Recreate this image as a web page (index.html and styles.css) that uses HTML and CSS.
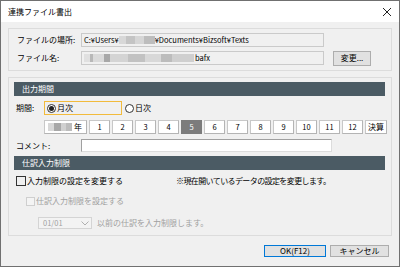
FILE: index.html
```html
<!DOCTYPE html>
<html lang="ja">
<head>
    <meta charset="UTF-8">
    <title>連携ファイル書出</title>
    <link rel="stylesheet" href="styles.css">
</head>
<body>
    <div class="window">
        <div class="titlebar">
            <span class="title">連携ファイル書出</span>
            <svg class="close" width="10" height="10" viewBox="0 0 10 10">
                <path d="M1 1 L9 9 M9 1 L1 9" stroke="#222" stroke-width="1" fill="none"/>
            </svg>
        </div>
        <div class="content">
            <div class="group files">
                <div class="file-row">
                    <span class="label">ファイルの場所:</span>
                    <div class="textbox">C:¥Users¥<span class="blur blur-user"></span>¥Documents¥Bizsoft¥Texts</div>
                </div>
                <div class="file-row">
                    <span class="label">ファイル名:</span>
                    <div class="textbox"><span class="blur blur-name"></span>bafx</div>
                    <button class="btn btn-change">変更...</button>
                </div>
            </div>

            <div class="group settings">
                <div class="section-head">出力期間</div>
                <div class="period-row">
                    <span class="label label-period">期間:</span>
                    <div class="radio-focus">
                        <span class="radio checked"></span><span>月次</span>
                    </div>
                    <span class="radio radio-day"></span><span>日次</span>
                </div>
                <div class="months">
                    <div class="cell cell-year"><span class="blur blur-year"></span>年</div>
                    <div class="cell">1</div>
                    <div class="cell">2</div>
                    <div class="cell">3</div>
                    <div class="cell">4</div>
                    <div class="cell selected">5</div>
                    <div class="cell">6</div>
                    <div class="cell">7</div>
                    <div class="cell">8</div>
                    <div class="cell">9</div>
                    <div class="cell">10</div>
                    <div class="cell">11</div>
                    <div class="cell">12</div>
                    <div class="cell cell-closing">決算</div>
                </div>
                <div class="comment-row">
                    <span class="label label-comment">コメント:</span>
                    <div class="comment-box"></div>
                </div>

                <div class="section-head">仕訳入力制限</div>
                <div class="check-row">
                    <span class="checkbox"></span>
                    <span class="check-text">入力制限の設定を変更する</span>
                    <span class="note">※現在開いているデータの設定を変更します。</span>
                </div>
                <div class="check-row sub disabled">
                    <span class="checkbox"></span>
                    <span>仕訳入力制限を設定する</span>
                </div>
                <div class="combo-row disabled">
                    <div class="combo">
                        <span>01/01</span>
                        <svg width="8" height="5" viewBox="0 0 8 5">
                            <path d="M0.5 0.5 L4 4 L7.5 0.5" stroke="#b0b0b0" fill="none"/>
                        </svg>
                    </div>
                    <span>以前の仕訳を入力制限します。</span>
                </div>
            </div>

            <div class="buttons">
                <button class="btn btn-ok">OK(F12)</button>
                <button class="btn btn-cancel">キャンセル</button>
            </div>
        </div>
    </div>
</body>
</html>
```

FILE: styles.css
```css
* {
    box-sizing: border-box;
}

body {
    margin: 0;
    font-family: "Noto Sans CJK JP", "Noto Sans", sans-serif;
    font-size: 8px;
    line-height: 1;
    color: #000;
}

.window {
    width: 400px;
    height: 267px;
    border: 1px solid #707070;
    background-color: #f0f0f0;
}

.titlebar {
    height: 21px;
    background-color: #fff;
    display: flex;
    align-items: center;
    justify-content: space-between;
    padding: 0 7px 0 7px;
}

.title {
    font-size: 8px;
}

.content {
    padding: 6px 7px 0 7px;
}

.group {
    border: 1px solid #dcdcdc;
}

.files {
    height: 43px;
    padding: 4px 0 0 8px;
    display: flex;
    flex-direction: column;
    gap: 4px;
}

.file-row {
    display: flex;
    align-items: center;
    height: 14px;
}

.file-row .label {
    width: 64px;
}

.textbox {
    width: 243px;
    height: 14px;
    border: 1px solid #cacaca;
    background-color: #f0f0f0;
    display: flex;
    align-items: center;
    padding-left: 2px;
    font-size: 7.5px;
    white-space: nowrap;
}

.blur {
    display: inline-block;
    height: 8px;
    filter: blur(0.6px);
}

.blur-user {
    width: 36px;
    background: linear-gradient(90deg, #d8d8d8 0 20%, #c4c4c4 20% 45%, #d6d6d6 45% 70%, #bdbdbd 70%);
}

.blur-name {
    width: 110px;
    margin-right: 1px;
    background: linear-gradient(90deg, #e0e0e0 0 5%, #b8b8b8 5% 8%, #dadada 8% 18%, #a8a8a8 18% 24%, #d4d4d4 24% 40%, #c2c2c2 40% 55%, #d8d8d8 55% 70%, #bcbcbc 70% 80%, #cfcfcf 80%);
}

.blur-year {
    width: 24px;
    margin-right: 2px;
    background: linear-gradient(90deg, #d8d8d8 0 25%, #a8a8a8 25% 55%, #d0d0d0 55% 75%, #bcbcbc 75%);
}

.btn {
    font-family: inherit;
    font-size: 8px;
    line-height: 1;
    padding: 0;
    background-color: #e1e1e1;
    border: 1px solid #adadad;
    color: #000;
}

.btn-change {
    margin-left: 9px;
    width: 38px;
    height: 15px;
}

.settings {
    margin-top: 6px;
    padding-bottom: 6px;
}

.section-head {
    height: 14px;
    margin: 4px 6px 0 5px;
    padding-left: 8px;
    background-color: #4b5b64;
    color: #fff;
    display: flex;
    align-items: center;
}

.period-row {
    margin-top: 5px;
    height: 14px;
    padding-left: 7px;
    display: flex;
    align-items: center;
}

.label-period {
    width: 28px;
}

.radio-focus {
    width: 78px;
    height: 14px;
    border: 1px solid #f2bb3c;
    display: flex;
    align-items: center;
    padding-left: 2px;
}

.radio {
    width: 9px;
    height: 9px;
    border: 1px solid #333;
    border-radius: 50%;
    background-color: #fff;
    margin-right: 1px;
    display: inline-flex;
    align-items: center;
    justify-content: center;
}

.radio.checked::after {
    content: "";
    width: 5px;
    height: 5px;
    border-radius: 50%;
    background-color: #222;
}

.radio-day {
    margin-left: 3px;
}

.months {
    margin: 5px 0 0 35px;
    height: 14px;
    display: flex;
    gap: 2px;
}

.cell {
    width: 21px;
    height: 14px;
    background-color: #fff;
    border: 1px solid #c8c8c8;
    border-right-color: #b4b4b4;
    border-bottom-color: #b4b4b4;
    display: flex;
    align-items: center;
    justify-content: center;
    font-size: 7.5px;
}

.cell-year {
    width: 43px;
    justify-content: flex-start;
    padding-left: 3px;
    font-size: 8px;
}

.cell-closing {
    width: 22px;
    font-size: 8px;
}

.cell.selected {
    background-color: #7c7c7c;
    border-color: #7c7c7c;
    color: #fff;
}

.comment-row {
    margin-top: 5px;
    height: 13px;
    padding-left: 7px;
    display: flex;
    align-items: center;
}

.label-comment {
    width: 65px;
}

.comment-box {
    width: 251px;
    height: 13px;
    background-color: #fff;
    border: 1px solid #a0a0a0;
    border-right-color: #dcdcdc;
    border-bottom-color: #dcdcdc;
}

.check-row {
    margin-top: 5px;
    height: 12px;
    padding-left: 7px;
    display: flex;
    align-items: center;
}

.checkbox {
    width: 10px;
    height: 10px;
    border: 1px solid #333;
    margin-right: 1px;
}

.note {
    margin-left: 53px;
    letter-spacing: -0.6px;
}

.check-row.sub {
    margin-top: 8px;
    padding-left: 17px;
}

.disabled {
    color: #a0a0a0;
}

.disabled .checkbox {
    width: 9px;
    height: 9px;
    border-color: #cfcfcf;
    background-color: #f4f4f4;
}

.combo-row {
    margin-top: 10px;
    height: 12px;
    padding-left: 29px;
    display: flex;
    align-items: center;
}

.combo {
    width: 54px;
    height: 12px;
    border: 1px solid #d4d4d4;
    background-color: #f3f3f3;
    display: flex;
    align-items: center;
    justify-content: space-between;
    padding: 0 2px 0 4px;
    margin-right: 5px;
    font-size: 7.5px;
}

.buttons {
    margin-top: 9px;
    padding-right: 3px;
    display: flex;
    justify-content: flex-end;
    gap: 4px;
}

.btn-ok,
.btn-cancel {
    width: 62px;
    height: 12px;
}

.btn-cancel {
    width: 59px;
}

.btn-ok {
    border-color: #0078d7;
}
```
